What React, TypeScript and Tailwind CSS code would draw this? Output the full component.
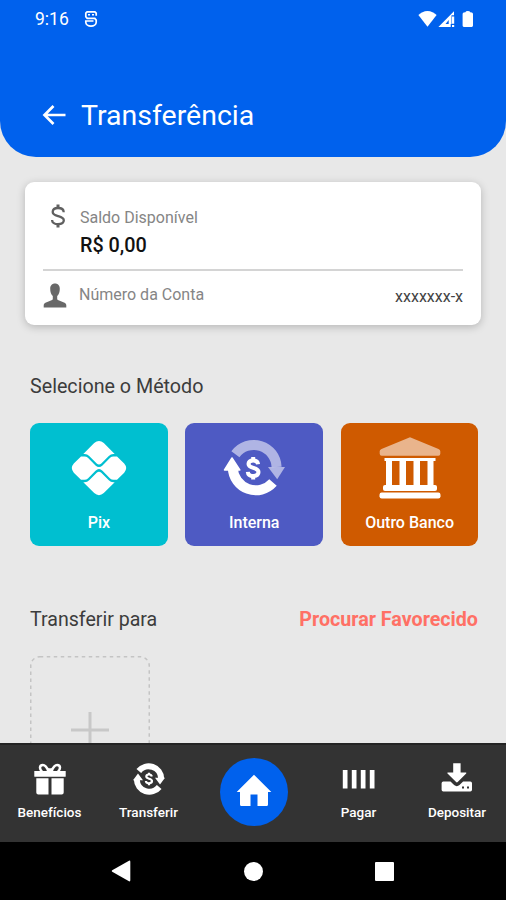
import React from 'react';

interface IconProps {
  className?: string;
}

const AppBadgeIcon: React.FC<IconProps> = ({ className }) => (
  <svg viewBox="0 0 14 18" className={className} fill="none" stroke="currentColor" strokeWidth="1.7">
    <path d="M12.200 5.800V3.200L10.900 1.800H3.100L1.800 3.200v3.600l1.400 1.600h7.600l1.400 1.700v2.200c0 2.400-2.600 3.900-5.200 3.900s-5.200-1.500-5.200-3.900v-1.300h7.700" />
    <path d="M4 4.700h2M8 4.700h2" strokeWidth="1.500" />
  </svg>
);

const StatusIcons = () => (
  <svg viewBox="0 0 56 18" className="h-[18px] w-14" fill="currentColor">
    <path d="M9.500 16.800.4 5.100C2.800 2.900 6 .9 9.500.9s6.700 2 9.100 4.200z" />
    <path fillRule="evenodd" d="M20.400 17 36 1.300v4h-2.500v8.800h-.8V17zM27.500 14h3.200v-4z" />
    <path d="M34 6.500h2.200v7.300H34zM34 15h2.200v2H34z" />
    <path d="M44.600 4.200q0-1.200 1.200-1.600l1.600-.3q.2-1.400 2.400-1.400t2.400 1.400l1.600.3q1.200.4 1.200 1.600v11.400q0 1.300-1.300 1.300h-7.800q-1.300 0-1.300-1.300z" />
  </svg>
);

const DollarIcon: React.FC<IconProps> = ({ className }) => (
  <svg viewBox="0 0 14 24" className={className} fill="none" stroke="currentColor" strokeWidth="2.300">
    <path d="M12.7 8.2C12.7 5.3 10.2 4 7 4S1.700 5.3 1.700 8c0 2.600 2.400 3.300 5.300 4.100s5.800 1.500 5.800 4.200c0 2.600-2.500 3.900-5.800 3.900s-5.900-1.400-5.900-4.300" />
    <path d="M7 .6V4M7 20v3.400" strokeWidth="3" />
  </svg>
);

const PersonIcon: React.FC<IconProps> = ({ className }) => (
  <svg viewBox="0 0 24 25" className={className} fill="currentColor">
    <path d="M12 .5c3 0 4.800 2.100 4.800 5.200 0 3.400-.9 5.800-2.600 7.400v2.700c0 .8.5 1.200 1.300 1.500l5.500 2.100c1.600.7 2.300 1.600 2.300 3.200v1.900H.7v-1.900c0-1.600.7-2.500 2.300-3.200l5.500-2.100c.8-.3 1.300-.7 1.300-1.500v-2.700C8.100 11.500 7.200 9.100 7.200 5.700 7.200 2.600 9 .5 12 .5z" />
  </svg>
);

const PixIcon = () => (
  <svg viewBox="0 0 56 56" className="h-14 w-14" fill="currentColor">
    <path d="M12.300 14 23.200 3.100Q28-1.200 32.800 3.100L43.700 14H42.300Q39.700 14 37.800 15.900L30.300 23.400Q28 25.500 25.700 23.400L18.200 15.900Q16.300 14 13.700 14z" />
    <path d="M12.300 42.200 23.200 53.100Q28 57.200 32.800 53.100L43.700 42.200H42.300Q39.700 42.200 37.800 40.300L30.300 32.700Q28 30.700 25.700 32.700L18.200 40.300Q16.300 42.200 13.700 42.200z" />
    <path d="M10 16.400h3.500q2 0 3.400 1.400l7.600 7.700Q28 28.700 31.500 25.500l7.600-7.700q1.400-1.400 3.400-1.400H46l7.200 7.100q4 4.600 0 9.200L46 39.800h-3.500q-2 0-3.400-1.400l-7.600-7.700Q28 27.500 24.500 30.700l-7.600 7.700Q15.500 39.800 13.500 39.800H10l-7.200-7.100q-4-4.600 0-9.200z" />
  </svg>
);

const ExchangeIcon = () => (
  <svg viewBox="0 0 62 58" className="h-[58px] w-[62px]" fill="none">
    <path d="M12.400 15.300A22.800 22.800 0 0 1 53.600 28" stroke="white" strokeOpacity=".55" strokeWidth="10" />
    <path d="M45 28h17L54.200 40.200z" fill="white" fillOpacity=".55" />
    <path d="M50 43.500A23 23 0 0 1 9.800 29" stroke="white" strokeWidth="10" />
    <path d="M1.500 31 9 19l7.800 12z" fill="white" stroke="white" strokeWidth="1.500" strokeLinejoin="round" />
    <g stroke="white" strokeWidth="4">
      <path d="M35.100 25.300c-.3-2.400-2-3.800-4.900-3.800-2.800 0-4.700 1.300-4.700 3.600 0 5 10 2.600 10 8 0 2.400-2 3.900-5.200 3.900s-5.300-1.500-5.500-4.200" />
      <path d="M30.200 18v3.800M30.200 36.500v3.900" />
    </g>
  </svg>
);

const BankIcon = () => (
  <svg viewBox="0 0 62 62" className="h-[62px] w-[62px]" fill="white">
    <path d="M31 .3 59.500 12q1.800.8 1.800 2.300v2.500q0 2-2 2H2.700q-2 0-2-2v-2.500Q.700 12.800 2.500 12z" fillOpacity=".55" />
    <path d="M5.500 21h51v3h-51zM7 24h6v25H7zM20.500 24H27v25h-6.500zM34.500 24H41v25h-6.500zM48.500 24h6v25h-6z" />
    <rect x="4" y="48" width="54" height="6" rx="2" />
    <rect x=".5" y="55.500" width="61" height="6" rx="2.200" />
  </svg>
);

const GiftIcon = () => (
  <svg viewBox="0 0 32 32" className="h-8 w-8" fill="currentColor">
    <path d="M.3 8h31.400v5.300q0 .5-.5.500H.8q-.5 0-.5-.5zM2.300 15.300h12.200V31.500H4.300q-2 0-2-2zM17.500 15.300h12.200v14.200q0 2-2 2H17.500z" />
    <path d="M14.800 8.500C13 4.500 11.400 2 8.900 2 7 2 6 3.200 6 4.800c0 1.500.8 2.700 2 3.700M17.200 8.500C19 4.500 20.600 2 23.100 2c1.900 0 2.900 1.200 2.900 2.800 0 1.500-.8 2.700-2 3.700" fill="none" stroke="currentColor" strokeWidth="2.500" />
    <path d="M12.800 5.200h6.400V9h-6.400z" />
  </svg>
);

const TransferIcon = () => (
  <svg viewBox="0 0 32 32" className="h-8 w-8" fill="none" stroke="currentColor">
    <path d="M5.800 8A12.600 12.600 0 0 1 28.200 15.500" strokeWidth="6" />
    <path d="M26.200 24A12.600 12.600 0 0 1 3.800 16.500" strokeWidth="6" />
    <path d="M22 14.800h10L27 21.500zM0 17.200h10L5 10.500z" fill="currentColor" stroke="none" />
    <g strokeWidth="2.200">
      <path d="M18.800 13.500c-.2-1.300-1.200-2-2.800-2s-2.700.8-2.700 2.100c0 2.800 5.700 1.400 5.700 4.500 0 1.300-1.200 2.200-3 2.200s-3-.8-3.100-2.300" />
      <path d="M16 9.700v2M16 20v2.200" />
    </g>
  </svg>
);

const HomeIcon = () => (
  <svg viewBox="0 0 36 33" className="h-[33px] w-9" fill="currentColor">
    <path d="M18 .7 35.300 18H32v12.500q0 1.500-1.500 1.500H21.500V20.500h-7V32H5.500Q4 32 4 30.500V18H.7z" />
  </svg>
);

const BarsIcon = () => (
  <svg viewBox="0 0 34 32" className="h-8 w-[34px]" fill="currentColor">
    <path d="M.8 7h4.700v18.500H.8zM9.800 7h4.700v18.500H9.800zM18.800 7h4.700v18.500h-4.700zM27.800 7h4.700v18.500h-4.700z" />
  </svg>
);

const DepositIcon = () => (
  <svg viewBox="0 0 32 32" className="h-8 w-8" fill="currentColor">
    <path d="M12.200.3h7.400v9.300h5.200q1 0 .4.900l-8.500 8.600q-.8.800-1.600 0L6.500 10.500q-.6-.9.400-.9h5.300z" />
    <path fillRule="evenodd" d="M2.300 18.500h7.200l3.600 3.500q2.700 2.300 5.400 0l3.600-3.500h7.200q1.700 0 1.700 1.700v6.600q0 1.700-1.700 1.700h-27Q.6 28.500.6 26.800v-6.600q0-1.700 1.700-1.700zM21 23.500v2h2v-2zM26 23.500v2h2v-2z" />
  </svg>
);

const methods = [
  { name: 'Pix', color: 'bg-[#00bfd0]', icon: <PixIcon /> },
  { name: 'Interna', color: 'bg-[#4e5ac3]', icon: <ExchangeIcon /> },
  { name: 'Outro Banco', color: 'bg-[#cf5a00]', icon: <BankIcon /> },
];

interface NavItemProps {
  label: string;
  icon: React.ReactNode;
  width: string;
}

const NavItem: React.FC<NavItemProps> = ({ label, icon, width }) => (
  <button className={`flex flex-col items-center pt-[18px] ${width}`}>
    {icon}
    <span className="mt-[7px] text-[13.5px] leading-5 font-medium">{label}</span>
  </button>
);

const App = () => {
  return (
    <div className="flex h-[900px] w-[506px] flex-col overflow-hidden bg-[#e8e8e8] font-[Roboto,sans-serif]">
      <header className="h-[157px] shrink-0 rounded-b-[36px] bg-[#0061ed] text-white">
        <div className="flex h-[38px] items-center pr-[32px] pl-[35px]">
          <span className="w-[34px] text-[17.5px]">9:16</span>
          <AppBadgeIcon className="ml-[15px] h-[18px] w-3.5" />
          <div className="ml-auto">
            <StatusIcons />
          </div>
        </div>
        <div className="mt-[58px] flex h-10 items-center pl-[42px]">
          <svg viewBox="0 0 24 20" className="-mt-0.5 h-5 w-6" fill="none" stroke="currentColor" strokeWidth="2.700">
            <path d="M23.500 10H2.500M11.500 1 2.500 10l9 9" />
          </svg>
          <h1 className="ml-[15px] text-[28.5px] leading-10">Transferência</h1>
        </div>
      </header>

      <main className="min-h-0 flex-1 overflow-hidden">
        <section className="mx-[25px] mt-[25px] h-[143px] rounded-[9px] bg-white px-[18px] shadow-[0_2px_8px_rgba(0,0,0,0.22)]">
          <div className="flex h-[89px] border-b-2 border-[#d4d4d4] pt-[22px]">
            <DollarIcon className="ml-2 h-6 w-3.5 text-[#606060]" />
            <div className="ml-[15px]">
              <p className="mt-0.5 text-base leading-6 text-[#858585]">Saldo Disponível</p>
              <p className="mt-0.5 text-[19.8px] leading-7 font-medium text-[#111]">R$ 0,00</p>
            </div>
          </div>
          <div className="flex h-[49px] items-center">
            <PersonIcon className="h-[25px] w-6 text-[#686868]" />
            <span className="-mt-0.5 ml-3 text-base text-[#858585]">Número da Conta</span>
            <span className="mt-0.5 ml-auto text-base text-[#444]">xxxxxxx-x</span>
          </div>
        </section>

        <h2 className="mt-12 ml-[30px] text-[19.7px] leading-7 text-[#3c3c3c]">Selecione o Método</h2>
        <div className="mt-[22px] ml-[30px] flex w-[448.500px] gap-[17.500px]">
          {methods.map((method) => (
            <button
              key={method.name}
              className={`flex h-[123px] flex-1 flex-col items-center rounded-[9px] text-white ${method.color}`}
            >
              <span className="mt-[13px] flex h-[64px] items-center">{method.icon}</span>
              <span className="mt-[11px] text-base leading-6 font-medium">{method.name}</span>
            </button>
          ))}
        </div>

        <div className="mt-[60px] ml-[30px] flex w-[448px] items-center justify-between leading-7">
          <h2 className="text-[19.6px] text-[#3c3c3c]">Transferir para</h2>
          <a className="text-[19.7px] font-bold text-[#ff7065]">Procurar Favorecido</a>
        </div>
        <svg viewBox="0 0 120 148" className="mt-[22px] ml-[30px] h-[148px] w-[120px]" fill="none">
          <rect x=".75" y=".75" width="118.500" height="146" rx="9" stroke="#c4c4c4" strokeWidth="1.500" strokeDasharray="3.500 3.500" />
          <path d="M41 74h38M60 56v38" stroke="#c8c8c8" strokeWidth="3" />
        </svg>
      </main>

      <nav className="flex h-[99px] shrink-0 items-start border-t-2 border-[#242424] bg-[#333] text-white">
        <NavItem label="Benefícios" icon={<GiftIcon />} width="w-[99px]" />
        <NavItem label="Transferir" icon={<TransferIcon />} width="w-[99px]" />
        <div className="flex w-[111px] justify-center pt-[13px]">
          <button className="flex h-[68px] w-[68px] items-center justify-center rounded-full bg-[#0061ed] pb-1">
            <HomeIcon />
          </button>
        </div>
        <NavItem label="Pagar" icon={<BarsIcon />} width="w-[99px]" />
        <NavItem label="Depositar" icon={<DepositIcon />} width="w-[98px]" />
      </nav>

      <div className="flex h-[58px] shrink-0 items-center bg-black text-white">
        <svg viewBox="0 0 20 22" className="ml-[111px] h-[22px] w-5" fill="currentColor">
          <path d="M18 .7q1.300-.5 1.300 1v18.600q0 1.500-1.300 1L1.200 11.700q-1-.7 0-1.400z" />
        </svg>
        <div className="ml-[113px] h-[19px] w-[19px] rounded-full bg-white" />
        <div className="ml-[112px] h-[19px] w-[19px] rounded-[1px] bg-white" />
      </div>
    </div>
  );
};

export default App;
